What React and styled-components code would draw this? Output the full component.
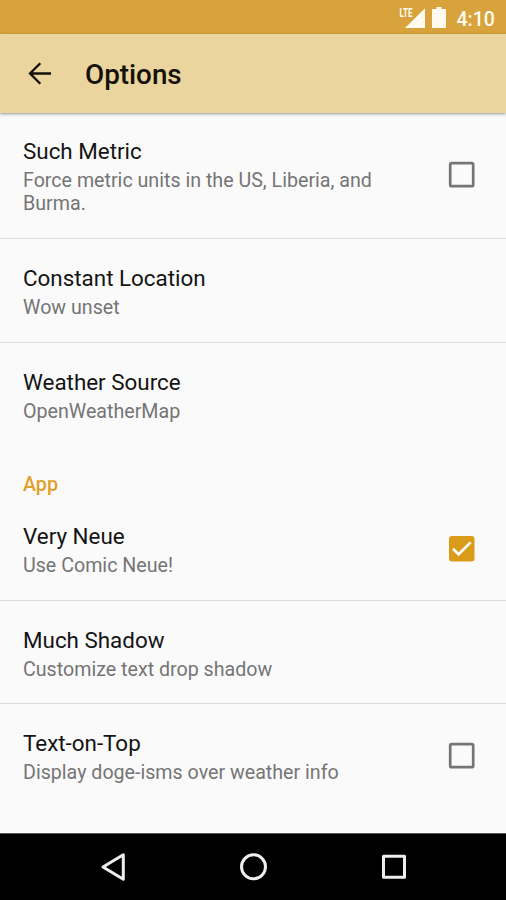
import React from "react";
import styled, { createGlobalStyle } from "styled-components";

const GlobalStyle = createGlobalStyle`
  * { box-sizing: border-box; }
  body { margin: 0; background: #fafafa; }
`;

const Screen = styled.div`
  display: flex;
  flex-direction: column;
  height: 900px;
  width: 100%;
  overflow: hidden;
  background: #fafafa;
  font-family: Roboto, sans-serif;
`;

const StatusBar = styled.header`
  display: flex;
  flex: none;
  justify-content: flex-end;
  align-items: flex-start;
  height: 34px;
  padding-right: 11px;
  background: #d8a23c;
  color: #fffaf0;
`;

const StatusIcons = styled.svg`
  display: block;
  width: 48px;
  height: 34px;
  margin-right: 9px;
  font: 700 12px Roboto, sans-serif;
`;

const Clock = styled.span`
  font-size: 19.6px;
  font-weight: 500;
  line-height: 39px;
`;

const AppBar = styled.div`
  display: flex;
  flex: none;
  align-items: center;
  height: 79px;
  padding: 1px 0 0 28px;
  background: #ebd59e;
  box-shadow: 0 1px 3px rgba(40, 50, 70, 0.5);
  z-index: 1;
`;

const BackIcon = styled.svg`
  display: block;
  width: 24px;
  height: 24px;
  margin-right: 33px;
`;

const Title = styled.h1`
  margin: 2px 0 0;
  font-size: 27.8px;
  font-weight: 500;
  line-height: 32px;
  color: #15110a;
`;

const Settings = styled.main`
  flex: 1;
  min-height: 0;
`;

const Row = styled.section`
  display: flex;
  align-items: center;
  justify-content: space-between;
  height: ${(p) => (p.$tall ? 126 : 103.6)}px;
  padding: ${(p) => (p.$tall ? 3 : 5)}px 31px 0 23px;
  border-bottom: 1px solid ${(p) => (p.$last ? "transparent" : "#dcdcdc")};
`;

const Label = styled.div`
  font-size: 22.4px;
  line-height: 24px;
  color: #141414;
`;

const Summary = styled.div`
  max-width: 370px;
  margin-top: 7px;
  font-size: 19.65px;
  line-height: 22.6px;
  color: #757575;
`;

const Category = styled.h2`
  height: 51px;
  margin: 0;
  padding: 27px 0 0 23px;
  font-size: 19.65px;
  font-weight: 500;
  line-height: 23px;
  color: #dfa02a;
`;

const CheckIcon = styled.svg`
  display: block;
  flex: none;
  width: 27px;
  height: 27px;
  margin-top: -5px;
`;

const NavBar = styled.nav`
  display: flex;
  flex: none;
  justify-content: center;
  height: 67px;
  background: #000;
  border-top: 1px solid #555;
`;

const NavIcon = styled.svg`
  display: block;
  width: 140.5px;
  height: 66px;
  fill: none;
  stroke: #eee;
  stroke-width: 3;
  stroke-linejoin: round;
`;

function Checkbox({ checked }) {
  return (
    <CheckIcon viewBox="0 0 27 27" role="checkbox" aria-checked={checked}>
      {checked ? (
        <>
          <rect x="1" y="1" width="25.5" height="25.5" rx="2.7" fill="#d99b18" />
          <path d="M5 13.7l5.6 5.6L22.6 7.4" fill="none" stroke="#fff" strokeWidth="2.7" />
        </>
      ) : (
        <rect x="2.2" y="2.2" width="23" height="23" rx="1.5" fill="none" stroke="#757575" strokeWidth="2.7" />
      )}
    </CheckIcon>
  );
}

function Preference({ label, summary, checked, tall, last }) {
  return (
    <Row $tall={tall} $last={last}>
      <div>
        <Label>{label}</Label>
        <Summary>{summary}</Summary>
      </div>
      {checked !== undefined && <Checkbox checked={checked} />}
    </Row>
  );
}

export default function App() {
  return (
    <Screen>
      <GlobalStyle />
      <StatusBar>
        <StatusIcons viewBox="0 0 48 34" fill="currentColor">
          <path d="M26 8.2V28H6z" />
          <text x="0.5" y="17" textLength="13" lengthAdjust="spacingAndGlyphs">LTE</text>
          <path d="M37.5 7h5v2H46q1 0 1 1v17q0 1-1 1H34q-1 0-1-1V10q0-1 1-1h3.5z" />
        </StatusIcons>
        <Clock>4:10</Clock>
      </StatusBar>
      <AppBar>
        <BackIcon viewBox="0 0 24 24" fill="none" stroke="#15110a" strokeWidth="2.3">
          <path d="M23 11.5H2.5M12.3 1.2L2 11.5l10.3 10.3" />
        </BackIcon>
        <Title>Options</Title>
      </AppBar>
      <Settings>
        <Preference tall label="Such Metric" summary="Force metric units in the US, Liberia, and Burma." checked={false} />
        <Preference label="Constant Location" summary="Wow unset" />
        <Preference last label="Weather Source" summary="OpenWeatherMap" />
        <Category>App</Category>
        <Preference label="Very Neue" summary="Use Comic Neue!" checked />
        <Preference label="Much Shadow" summary="Customize text drop shadow" />
        <Preference last label="Text-on-Top" summary="Display doge-isms over weather info" checked={false} />
      </Settings>
      <NavBar>
        <NavIcon viewBox="0 0 140.5 66">
          <path d="M61 33L81.3 20.8v24.4z" />
        </NavIcon>
        <NavIcon viewBox="0 0 140.5 66">
          <circle cx="70.5" cy="32.8" r="12" />
        </NavIcon>
        <NavIcon viewBox="0 0 140.5 66">
          <rect x="60.5" y="22.2" width="21" height="21" />
        </NavIcon>
      </NavBar>
    </Screen>
  );
}
